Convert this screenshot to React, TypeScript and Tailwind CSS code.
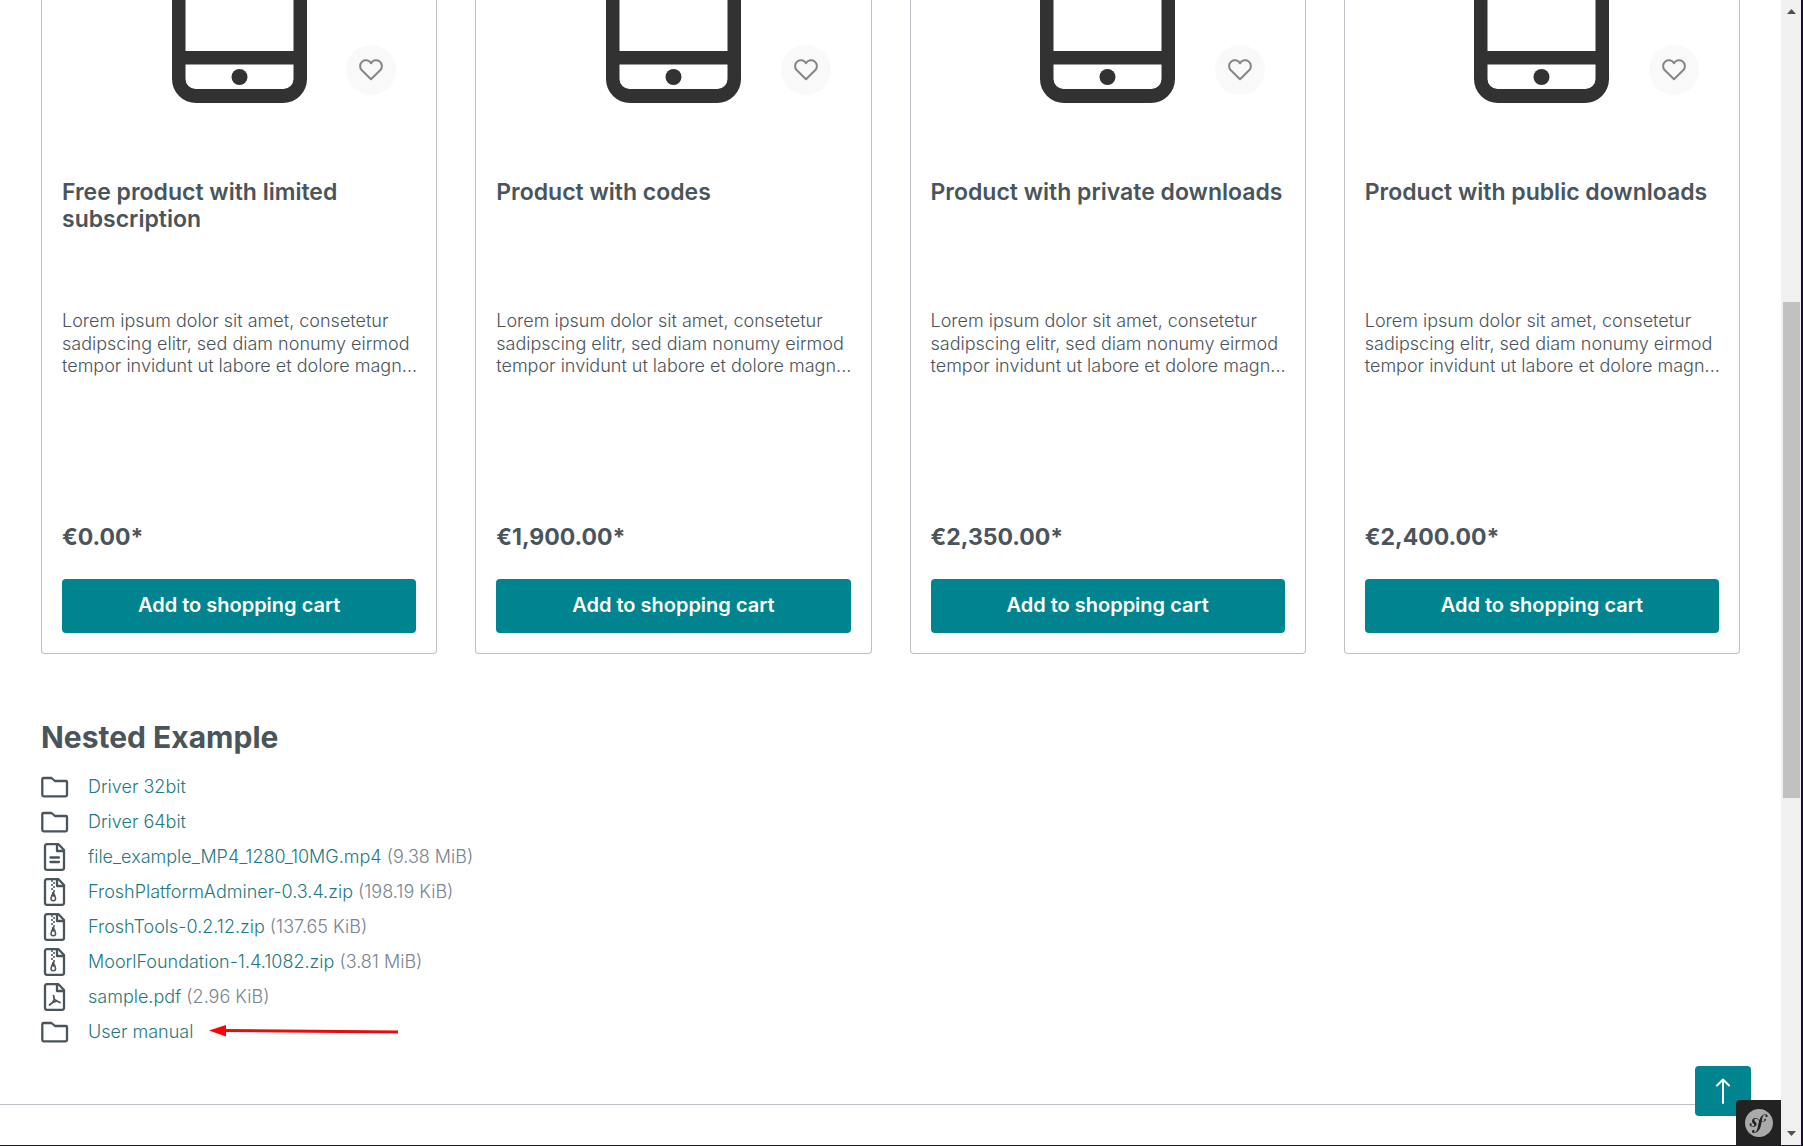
import React from "react";
import { SiSymfony } from "react-icons/si";

type Product = { name: string; price: string };
type FileKind = "folder" | "text" | "zip" | "pdf";
type Entry = { kind: FileKind; name: string; size?: string };

const products: Product[] = [
  { name: "Free product with limited subscription", price: "€0.00*" },
  { name: "Product with codes", price: "€1,900.00*" },
  { name: "Product with private downloads", price: "€2,350.00*" },
  { name: "Product with public downloads", price: "€2,400.00*" },
];

const descriptionLines = [
  "Lorem ipsum dolor sit amet, consetetur",
  "sadipscing elitr, sed diam nonumy eirmod",
  "tempor invidunt ut labore et dolore magn...",
];

const entries: Entry[] = [
  { kind: "folder", name: "Driver 32bit" },
  { kind: "folder", name: "Driver 64bit" },
  { kind: "text", name: "file_example_MP4_1280_10MG.mp4", size: "(9.38 MiB)" },
  { kind: "zip", name: "FroshPlatformAdminer-0.3.4.zip", size: "(198.19 KiB)" },
  { kind: "zip", name: "FroshTools-0.2.12.zip", size: "(137.65 KiB)" },
  { kind: "zip", name: "MoorlFoundation-1.4.1082.zip", size: "(3.81 MiB)" },
  { kind: "pdf", name: "sample.pdf", size: "(2.96 KiB)" },
  { kind: "folder", name: "User manual" },
];

function Phone() {
  return (
    <svg width="135" height="103" viewBox="0 0 135 103" aria-hidden="true">
      <path
        fill="#323232"
        fillRule="evenodd"
        d="M0 0H135V79A24 24 0 0 1 111 103H24A24 24 0 0 1 0 79ZM13.500 0V51H121.500V0ZM13.500 64.500V79A10 10 0 0 0 23.500 89H111.500A10 10 0 0 0 121.500 79V64.500Z"
      />
      <circle cx="67.500" cy="77" r="8" fill="#323232" />
    </svg>
  );
}

function HeartIcon() {
  return (
    <svg width="24" height="24" viewBox="0 0 24 24" fill="none" stroke="#858585" strokeWidth="2" strokeLinejoin="round" aria-hidden="true">
      <path d="M12 5.200C10.200 1.900 6 1.500 3.600 3.200C.8 5.300.3 9.300 2.600 12L12 21.200L21.400 12C23.700 9.300 23.200 5.300 20.400 3.200C18 1.500 13.800 1.900 12 5.200Z" />
    </svg>
  );
}

function EntryIcon({ kind }: { kind: FileKind }) {
  return (
    <svg
      width="28"
      height="28"
      viewBox="0 0 28 28"
      fill="none"
      stroke="#4a545b"
      strokeWidth="2.300"
      strokeLinejoin="round"
      strokeLinecap="round"
      className="shrink-0"
      aria-hidden="true"
    >
      {kind === "folder" ? (
        <path d="M2.600 5H10.500L14 8H25Q26 8 26 9V22Q26 23.300 24.700 23.300H2.600Q1.300 23.300 1.300 22V6.300Q1.300 5 2.600 5Z" />
      ) : (
        <>
          <path d="M5.500 1.200H17.500L23 7V24.800Q23 26.800 21 26.800H6Q4 26.800 4 24.800V3.200Q4 1.200 6 1.200Z" />
          <path d="M16 1.500V8H22.500" />
        </>
      )}
      {kind === "text" && <path d="M9.500 14.500H18M9.500 19H18" />}
      {kind === "zip" && (
        <>
          <path strokeWidth="1.500" strokeLinecap="butt" d="M10 3H12M12 5H14M10 7H12M12 9H14M10 11H12M12 13H14" />
          <path strokeWidth="2.600" d="M12.300 15V17.500" />
          <path strokeWidth="1.500" d="M11 17L10 20.500A2.300 2.300 0 1 0 14.600 20.500L13.600 17" />
        </>
      )}
      {kind === "pdf" && <path strokeWidth="1.700" d="M12.500 12.500L13.300 16.500L11.500 19.500L8.500 22M11.500 19.500L16 18L19 19.500M13.300 16.500L16 18" />}
    </svg>
  );
}

function ProductCard({ product }: { product: Product }) {
  return (
    <article className="min-w-0 rounded-b border border-t-0 border-[#bcc1c7] px-5 pb-5">
      <div className="relative flex justify-center">
        <Phone />
        <button type="button" aria-label="Add to wishlist" className="absolute right-5 bottom-2 grid size-[50px] place-items-center rounded-full bg-[#f9f9f9]">
          <HeartIcon />
        </button>
      </div>
      <h3 className="mt-[76px] h-[131px] text-[23px] leading-[27px] font-semibold">{product.name}</h3>
      <p className="h-[68px] text-lg leading-tight font-light">
        {descriptionLines.map((line) => (
          <span key={line} className="block whitespace-nowrap">
            {line}
          </span>
        ))}
      </p>
      <p className="mt-[144px] text-[23px] leading-[30px] font-bold">{product.price}</p>
      <button type="button" className="mt-[27px] h-[54px] w-full rounded bg-[#00848f] pb-0.5 text-xl font-semibold text-white">
        Add to shopping cart
      </button>
    </article>
  );
}

function Scrollbar() {
  return (
    <div className="flex w-[22px] shrink-0 flex-col border-r-2 border-[#1a0a3a] bg-[#f0f0f0] pr-px pl-0.5" aria-hidden="true">
      <svg width="17" height="24" viewBox="0 0 17 24">
        <path d="M4 14L8.500 9L13 14Z" fill="#505050" />
      </svg>
      <div className="flex-[278]" />
      <div className="flex-[496] bg-[#c1c1c1]" />
      <div className="flex-[323]" />
      <svg width="17" height="24" viewBox="0 0 17 24">
        <path d="M4 10H13L8.500 15Z" fill="#505050" />
      </svg>
    </div>
  );
}

export default function App() {
  return (
    <div className="flex h-screen overflow-hidden border-b border-[#1c1b2b] bg-white font-['Inter',sans-serif] text-[#4a545b]">
      <div className="relative min-w-0 flex-1">
        <main className="px-[41px]">
          <section className="grid grid-cols-4 gap-[38px]">
            {products.map((p) => (
              <ProductCard key={p.name} product={p} />
            ))}
          </section>
          <h2 className="mt-16 text-[30px] leading-[38px] font-bold">Nested Example</h2>
          <ul className="mt-[13px] text-lg font-light">
            {entries.map((e) => (
              <li key={e.name} className="flex h-[35px] items-center">
                <EntryIcon kind={e.kind} />
                <a href="#" className="ml-[19px] text-[#1f7a80]">
                  {e.name}
                </a>
                {e.size && <span className="ml-[5px] text-[#798490]">{e.size}</span>}
                {e.name === "User manual" && (
                  <svg width="190" height="14" viewBox="0 0 190 14" className="ml-4" aria-hidden="true">
                    <path d="M15 5.500L189 7" stroke="#e60d0d" strokeWidth="3" />
                    <path d="M0 5.500L17 0V11.500Z" fill="#ff0000" />
                  </svg>
                )}
              </li>
            ))}
          </ul>
        </main>
        <hr className="mt-[55px] border-[#bcc1c7]" />
        <button type="button" aria-label="Back to top" className="absolute right-[30px] bottom-[29px] grid h-[50px] w-14 place-items-center rounded bg-[#00848f]">
          <svg width="16" height="26" viewBox="0 0 16 26" fill="none" stroke="white" strokeWidth="2" strokeLinecap="round" strokeLinejoin="round" aria-hidden="true">
            <path d="M8 25V1.500M2 7.500L8 1.500L14 7.500" />
          </svg>
        </button>
        <button type="button" aria-label="Open Symfony toolbar" className="absolute right-0 bottom-0 grid size-[45px] place-items-center rounded-tl bg-[#222222] text-[#aaaaaa]">
          <SiSymfony size={28} />
        </button>
      </div>
      <Scrollbar />
    </div>
  );
}
